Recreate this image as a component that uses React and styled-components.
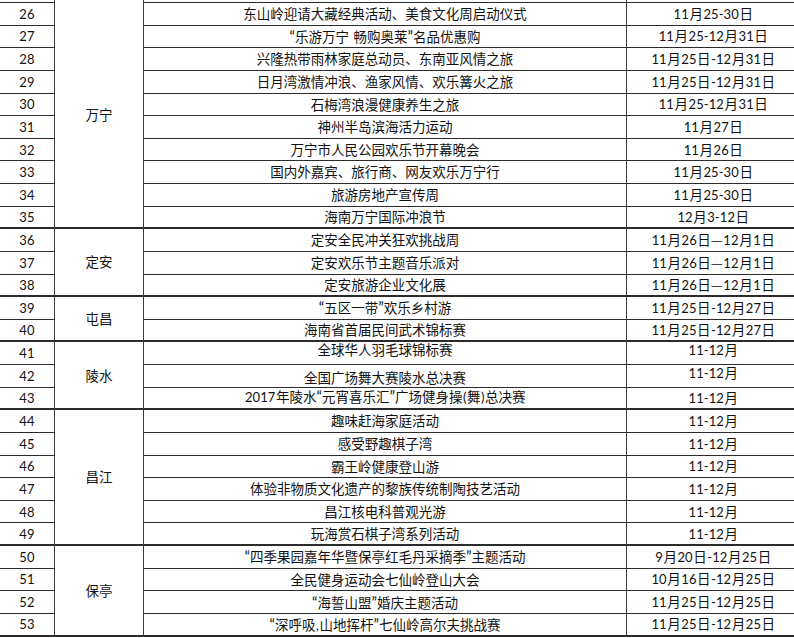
import React from 'react';
import styled, { createGlobalStyle, css } from 'styled-components';

const Global = createGlobalStyle`
  html, body { margin: 0; padding: 0; background: #fff; }
  body { width: 794px; height: 638px; overflow: hidden; }
`;

const Sheet = styled.div`
  display: grid;
  grid-template-columns: 55px 89px 483px 172px;
  grid-template-rows: 3px repeat(28, 22.64px);
  width: 799px;
  color: #111;
  font-family: "Noto Sans CJK SC", sans-serif;
  font-size: 13.5px;
  line-height: 1;
`;

const Cell = styled.div`
  box-sizing: border-box;
  grid-column: ${p => p.$col};
  display: flex;
  justify-content: center;
  align-items: ${p => (p.$v === 'top' ? 'flex-start' : 'center')};
  padding-top: ${p => (p.$v === 'low' ? '4px' : p.$v === 'top' ? '1px' : p.$pad || '0')};
  border-bottom: ${p => (p.$end ? 2 : 1)}px solid #2b2b2b;
  border-right: ${p => (p.$col === 4 ? 'none' : '1px solid #3c3c3c')};
  white-space: nowrap;
  ${p => p.$span && css`grid-row: span ${p.$span};`}
`;

const Label = styled.span`
  display: inline-block;
`;

const Latin = styled.span`
  font-family: "Lato", "Liberation Sans", sans-serif;
  font-size: 13px;
  letter-spacing: 0.1px;
  margin: 0 0.5px;
`;

const Quote = styled.span`
  font-family: "Lato", "Liberation Sans", sans-serif;
  font-size: 15px;
`;

const LATIN = /^[0-9A-Za-z\-().,\s]+$/;

function Rich({ text }) {
  const parts = text.match(/[“”]|[0-9A-Za-z\-().,\s]+|[^0-9A-Za-z\-().,\s“”]+/g) || [];
  return (
    <Label>
      {parts.map((p, i) =>
        /[“”]/.test(p) ? (
          <Quote key={i}>{p}</Quote>
        ) : LATIN.test(p) ? (
          <Latin key={i}>{p}</Latin>
        ) : (
          <React.Fragment key={i}>{p}</React.Fragment>
        )
      )}
    </Label>
  );
}

const D1 = '11月25日-12月31日';
const D2 = '11月26日—12月1日';
const D3 = '11月25日-12月27日';
const D4 = '11-12月';
const D5 = '11月25日-12月25日';

const groups = [
  {
    name: '万宁',
    lead: true,
    rows: [
      { n: 26, e: '东山岭迎请大藏经典活动、美食文化周启动仪式', d: '11月25-30日' },
      { n: 27, e: '“乐游万宁 畅购奥莱”名品优惠购', d: '11月25-12月31日' },
      { n: 28, e: '兴隆热带雨林家庭总动员、东南亚风情之旅', d: D1 },
      { n: 29, e: '日月湾激情冲浪、渔家风情、欢乐篝火之旅', d: D1 },
      { n: 30, e: '石梅湾浪漫健康养生之旅', d: '11月25-12月31日' },
      { n: 31, e: '神州半岛滨海活力运动', d: '11月27日' },
      { n: 32, e: '万宁市人民公园欢乐节开幕晚会', d: '11月26日' },
      { n: 33, e: '国内外嘉宾、旅行商、网友欢乐万宁行', d: '11月25-30日' },
      { n: 34, e: '旅游房地产宣传周', d: '11月25-30日' },
      { n: 35, e: '海南万宁国际冲浪节', d: '12月3-12日' },
    ],
  },
  {
    name: '定安',
    rows: [
      { n: 36, e: '定安全民冲关狂欢挑战周', d: D2 },
      { n: 37, e: '定安欢乐节主题音乐派对', d: D2 },
      { n: 38, e: '定安旅游企业文化展', d: D2 },
    ],
  },
  {
    name: '屯昌',
    rows: [
      { n: 39, e: '“五区一带”欢乐乡村游', d: D3 },
      { n: 40, e: '海南省首届民间武术锦标赛', d: D3 },
    ],
  },
  {
    name: '陵水',
    rows: [
      { n: 41, e: '全球华人羽毛球锦标赛', d: D4, ev: 'top', dv: 'top' },
      { n: 42, e: '全国广场舞大赛陵水总决赛', d: D4, ev: 'low', dv: 'top' },
      { n: 43, e: '2017年陵水“元宵喜乐汇”广场健身操(舞)总决赛', d: D4, ev: 'top' },
    ],
  },
  {
    name: '昌江',
    rows: [
      { n: 44, e: '趣味赶海家庭活动', d: D4 },
      { n: 45, e: '感受野趣棋子湾', d: D4 },
      { n: 46, e: '霸王岭健康登山游', d: D4 },
      { n: 47, e: '体验非物质文化遗产的黎族传统制陶技艺活动', d: D4 },
      { n: 48, e: '昌江核电科普观光游', d: D4 },
      { n: 49, e: '玩海赏石棋子湾系列活动', d: D4 },
    ],
  },
  {
    name: '保亭',
    rows: [
      { n: 50, e: '“四季果园嘉年华暨保亭红毛丹采摘季”主题活动', d: '9月20日-12月25日' },
      { n: 51, e: '全民健身运动会七仙岭登山大会', d: '10月16日-12月25日' },
      { n: 52, e: '“海誓山盟”婚庆主题活动', d: D5 },
      { n: 53, e: '“深呼吸,山地挥杆”七仙岭高尔夫挑战赛', d: D5 },
    ],
  },
];

export default function App() {
  const cells = [];
  groups.forEach((g, gi) => {
    if (g.lead) {
      cells.push(<Cell key="s1" $col={1} />);
      cells.push(
        <Cell key={`g${gi}`} $col={2} $span={g.rows.length + 1} $end $pad="3px">
          <Rich text={g.name} />
        </Cell>
      );
      cells.push(<Cell key="s3" $col={3} />);
      cells.push(<Cell key="s4" $col={4} />);
    }
    g.rows.forEach((r, ri) => {
      const end = ri === g.rows.length - 1;
      cells.push(
        <Cell key={`n${r.n}`} $col={1} $end={end}>
          <Rich text={String(r.n)} />
        </Cell>
      );
      if (!g.lead && ri === 0) {
        cells.push(
          <Cell key={`g${gi}`} $col={2} $span={g.rows.length} $end>
            <Rich text={g.name} />
          </Cell>
        );
      }
      cells.push(
        <Cell key={`e${r.n}`} $col={3} $end={end} $v={r.ev}>
          <Rich text={r.e} />
        </Cell>
      );
      cells.push(
        <Cell key={`d${r.n}`} $col={4} $end={end} $v={r.dv}>
          <Rich text={r.d} />
        </Cell>
      );
    });
  });

  return (
    <>
      <Global />
      <Sheet>{cells}</Sheet>
    </>
  );
}
